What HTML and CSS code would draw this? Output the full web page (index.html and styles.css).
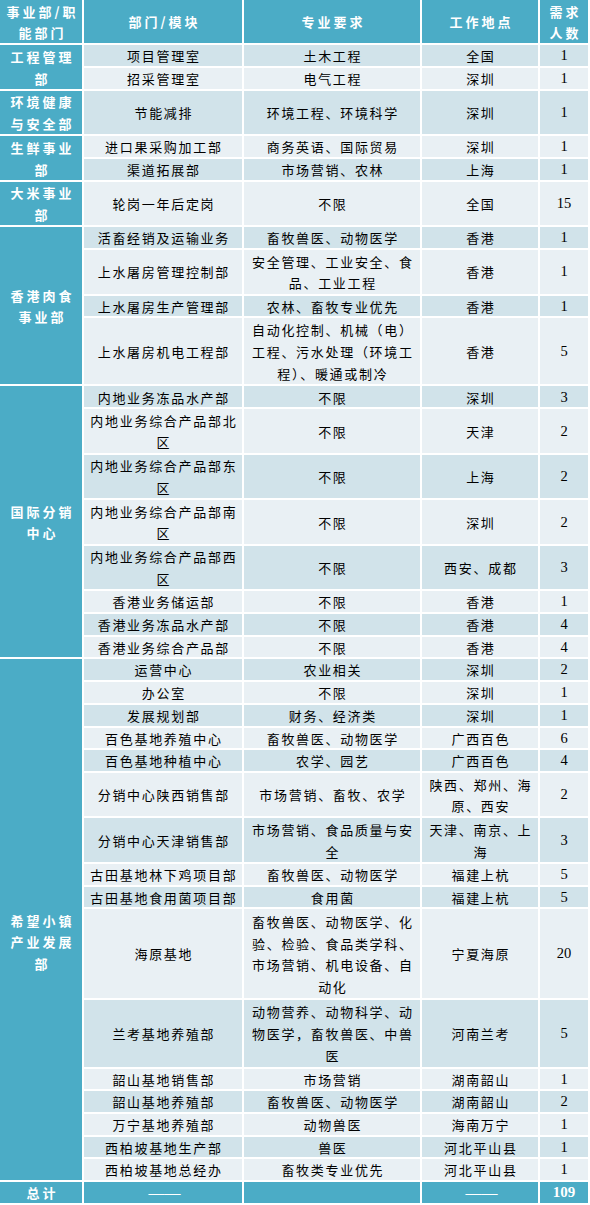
FILE: index.html
```html
<!DOCTYPE html>
<html lang="zh-CN">
<head>
<meta charset="utf-8">
<title>招聘需求</title>
<link rel="stylesheet" href="styles.css">
</head>
<body>
<div class="sheet">
  <div class="c hd s2">事业部/职<br>能部门</div>
  <div class="c hd s2">部门/模块</div>
  <div class="c hd s2">专业要求</div>
  <div class="c hd s2">工作地点</div>
  <div class="c hd s2">需求<br>人数</div>

  <div class="c grp s2">工程管理<br>部</div>
  <div class="c dk">项目管理室</div><div class="c dk">土木工程</div><div class="c dk">全国</div><div class="c dk n">1</div>
  <div class="c lt">招采管理室</div><div class="c lt">电气工程</div><div class="c lt">深圳</div><div class="c lt n">1</div>

  <div class="c grp s2">环境健康<br>与安全部</div>
  <div class="c dk s2">节能减排</div><div class="c dk s2">环境工程、环境科学</div><div class="c dk s2">深圳</div><div class="c dk n s2">1</div>

  <div class="c grp s2">生鲜事业<br>部</div>
  <div class="c lt">进口果采购加工部</div><div class="c lt">商务英语、国际贸易</div><div class="c lt">深圳</div><div class="c lt n">1</div>
  <div class="c dk">渠道拓展部</div><div class="c dk">市场营销、农林</div><div class="c dk">上海</div><div class="c dk n">1</div>

  <div class="c grp s2">大米事业<br>部</div>
  <div class="c lt s2">轮岗一年后定岗</div><div class="c lt s2">不限</div><div class="c lt s2">全国</div><div class="c lt n s2">15</div>

  <div class="c grp s7">香港肉食<br>事业部</div>
  <div class="c dk">活畜经销及运输业务</div><div class="c dk">畜牧兽医、动物医学</div><div class="c dk">香港</div><div class="c dk n">1</div>
  <div class="c lt s2">上水屠房管理控制部</div><div class="c lt s2">安全管理、工业安全、食<br>品、工业工程</div><div class="c lt s2">香港</div><div class="c lt n s2">1</div>
  <div class="c dk">上水屠房生产管理部</div><div class="c dk">农林、畜牧专业优先</div><div class="c dk">香港</div><div class="c dk n">1</div>
  <div class="c lt s3">上水屠房机电工程部</div><div class="c lt s3">自动化控制、机械（电）<br>工程、污水处理（环境工<br>程）、暖通或制冷</div><div class="c lt s3">香港</div><div class="c lt n s3">5</div>

  <div class="c grp s12">国际分销<br>中心</div>
  <div class="c dk">内地业务冻品水产部</div><div class="c dk">不限</div><div class="c dk">深圳</div><div class="c dk n">3</div>
  <div class="c lt s2">内地业务综合产品部北<br>区</div><div class="c lt s2">不限</div><div class="c lt s2">天津</div><div class="c lt n s2">2</div>
  <div class="c dk s2">内地业务综合产品部东<br>区</div><div class="c dk s2">不限</div><div class="c dk s2">上海</div><div class="c dk n s2">2</div>
  <div class="c lt s2">内地业务综合产品部南<br>区</div><div class="c lt s2">不限</div><div class="c lt s2">深圳</div><div class="c lt n s2">2</div>
  <div class="c dk s2">内地业务综合产品部西<br>区</div><div class="c dk s2">不限</div><div class="c dk s2">西安、成都</div><div class="c dk n s2">3</div>
  <div class="c lt">香港业务储运部</div><div class="c lt">不限</div><div class="c lt">香港</div><div class="c lt n">1</div>
  <div class="c dk">香港业务冻品水产部</div><div class="c dk">不限</div><div class="c dk">香港</div><div class="c dk n">4</div>
  <div class="c lt">香港业务综合产品部</div><div class="c lt">不限</div><div class="c lt">香港</div><div class="c lt n">4</div>

  <div class="c grp s23 low">希望小镇<br>产业发展<br>部</div>
  <div class="c dk">运营中心</div><div class="c dk">农业相关</div><div class="c dk">深圳</div><div class="c dk n">2</div>
  <div class="c lt">办公室</div><div class="c lt">不限</div><div class="c lt">深圳</div><div class="c lt n">1</div>
  <div class="c dk">发展规划部</div><div class="c dk">财务、经济类</div><div class="c dk">深圳</div><div class="c dk n">1</div>
  <div class="c lt">百色基地养殖中心</div><div class="c lt">畜牧兽医、动物医学</div><div class="c lt">广西百色</div><div class="c lt n">6</div>
  <div class="c dk">百色基地种植中心</div><div class="c dk">农学、园艺</div><div class="c dk">广西百色</div><div class="c dk n">4</div>
  <div class="c lt s2">分销中心陕西销售部</div><div class="c lt s2">市场营销、畜牧、农学</div><div class="c lt s2">陕西、郑州、海<br>原、西安</div><div class="c lt n s2">2</div>
  <div class="c dk s2">分销中心天津销售部</div><div class="c dk s2">市场营销、食品质量与安<br>全</div><div class="c dk s2">天津、南京、上<br>海</div><div class="c dk n s2">3</div>
  <div class="c lt">古田基地林下鸡项目部</div><div class="c lt">畜牧兽医、动物医学</div><div class="c lt">福建上杭</div><div class="c lt n">5</div>
  <div class="c dk">古田基地食用菌项目部</div><div class="c dk">食用菌</div><div class="c dk">福建上杭</div><div class="c dk n">5</div>
  <div class="c lt s4">海原基地</div><div class="c lt s4">畜牧兽医、动物医学、化<br>验、检验、食品类学科、<br>市场营销、机电设备、自<br>动化</div><div class="c lt s4">宁夏海原</div><div class="c lt n s4">20</div>
  <div class="c dk s3">兰考基地养殖部</div><div class="c dk s3">动物营养、动物科学、动<br>物医学，畜牧兽医、中兽<br>医</div><div class="c dk s3">河南兰考</div><div class="c dk n s3">5</div>
  <div class="c lt">韶山基地销售部</div><div class="c lt">市场营销</div><div class="c lt">湖南韶山</div><div class="c lt n">1</div>
  <div class="c dk">韶山基地养殖部</div><div class="c dk">畜牧兽医、动物医学</div><div class="c dk">湖南韶山</div><div class="c dk n">2</div>
  <div class="c lt">万宁基地养殖部</div><div class="c lt">动物兽医</div><div class="c lt">海南万宁</div><div class="c lt n">1</div>
  <div class="c dk">西柏坡基地生产部</div><div class="c dk">兽医</div><div class="c dk">河北平山县</div><div class="c dk n">1</div>
  <div class="c lt">西柏坡基地总经办</div><div class="c lt">畜牧类专业优先</div><div class="c lt">河北平山县</div><div class="c lt n">1</div>

  <div class="c grp tot">总计</div>
  <div class="c tot"><span class="dash">——</span></div>
  <div class="c tot"></div>
  <div class="c tot"><span class="dash">——</span></div>
  <div class="c tot n total-num">109</div>
</div>
</body>
</html>
```

FILE: styles.css
```css
html, body {
  margin: 0;
  padding: 0;
  background: #ffffff;
}

.sheet {
  display: grid;
  grid-template-columns: 82px 158px 176px 116px 48px;
  grid-auto-rows: 20.736px;
  gap: 2px;
  width: 590px;
  background: #ffffff;
  font-family: "Noto Sans CJK SC", "Noto Sans", sans-serif;
  font-size: 13px;
  color: #000000;
}

.c {
  display: flex;
  align-items: center;
  justify-content: center;
  text-align: center;
  line-height: 21.7px;
  letter-spacing: 1.7px;
  padding: 1px 0 0 1.7px;
  white-space: nowrap;
  overflow: visible;
  box-sizing: border-box;
}

.s2 { grid-row: span 2; }
.s3 { grid-row: span 3; }
.s4 { grid-row: span 4; }
.s7 { grid-row: span 7; }
.s12 { grid-row: span 12; }
.s23 { grid-row: span 23; }

.dk { background: #d1e3ea; }
.lt { background: #e9f0f4; }

.hd,
.grp,
.tot {
  background: #4bacc6;
  color: #ffffff;
  font-weight: 700;
  letter-spacing: 3px;
  padding-left: 3px;
}

.grp.low {
  padding-top: 45px;
}

.n {
  font-family: "Liberation Serif", "Times New Roman", serif;
  font-size: 14.5px;
  letter-spacing: 0;
  padding-left: 0;
}

.dash {
  font-family: "Liberation Serif", serif;
  font-size: 16px;
  font-weight: 400;
  letter-spacing: 0;
  color: #ffffff;
}

.total-num {
  font-size: 15px;
  letter-spacing: 0;
  padding-left: 0;
}
```
